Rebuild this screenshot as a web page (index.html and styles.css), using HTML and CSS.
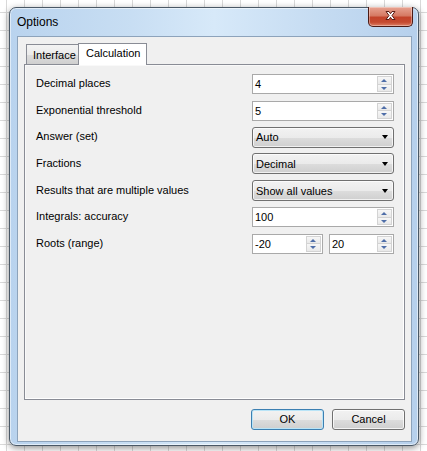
FILE: index.html
```html
<!DOCTYPE html>
<html>
<head>
<meta charset="utf-8">
<link rel="stylesheet" href="styles.css">
</head>
<body>
<div class="desktop">
  <div class="window">
    <div class="titlebar">
      <span class="title">Options</span>
      <div class="close">
        <svg width="45" height="20" viewBox="0 0 45 20">
          <path d="M18 5.5h3l1.5 2.2 1.5-2.2h3l-3 4 3 4h-3l-1.5-2.2-1.5 2.2h-3l3-4z" fill="#fff" stroke="#5a1c14" stroke-width="1" stroke-linejoin="round"/>
        </svg>
      </div>
    </div>
    <div class="client">
      <div class="tabs">
        <div class="tab">Interface</div>
        <div class="tab active">Calculation</div>
      </div>
      <div class="panel">
        <div class="form">
          <div class="label">Decimal places</div>
          <div class="spin"><span class="val">4</span><span class="arrows"><i class="up"></i><i class="down"></i></span></div>

          <div class="label">Exponential threshold</div>
          <div class="spin"><span class="val">5</span><span class="arrows"><i class="up"></i><i class="down"></i></span></div>

          <div class="label">Answer (set)</div>
          <div class="combo"><span class="val">Auto</span><span class="caret"></span></div>

          <div class="label">Fractions</div>
          <div class="combo"><span class="val">Decimal</span><span class="caret"></span></div>

          <div class="label">Results that are multiple values</div>
          <div class="combo"><span class="val">Show all values</span><span class="caret"></span></div>

          <div class="label">Integrals: accuracy</div>
          <div class="spin"><span class="val">100</span><span class="arrows"><i class="up"></i><i class="down"></i></span></div>

          <div class="label">Roots (range)</div>
          <div class="pair">
            <div class="spin first"><span class="val">-20</span><span class="arrows"><i class="up"></i><i class="down"></i></span></div>
            <div class="spin second"><span class="val">20</span><span class="arrows"><i class="up"></i><i class="down"></i></span></div>
          </div>
        </div>
      </div>
      <div class="buttons">
        <div class="btn default">OK</div>
        <div class="btn">Cancel</div>
      </div>
    </div>
  </div>
</div>
</body>
</html>
```

FILE: styles.css
```css
html, body {
  margin: 0;
  padding: 0;
}
body {
  width: 427px;
  height: 451px;
  overflow: hidden;
  background-color: #fff;
  background-image:
    linear-gradient(to right, #d9d9d9 1px, transparent 1px),
    linear-gradient(to bottom, #d9d9d9 1px, transparent 1px);
  background-size: 18px 18px;
  background-position: 6px 12px;
  font-family: "Liberation Sans", Arial, sans-serif;
  font-size: 11px;
  color: #000;
}
.desktop {
  padding: 7px 0 0 9px;
}
.window {
  box-sizing: border-box;
  width: 410px;
  height: 439px;
  border: 1px solid #4a5866;
  border-radius: 7px;
  background: linear-gradient(to right, #b9d3ee 0%, #c8def3 30%, #d7e9f9 50%, #c6dcf2 75%, #b6d0ec 100%);
  box-shadow: 0 2px 7px rgba(0,0,0,0.45), inset 0 0 0 1px rgba(255,255,255,0.55);
  display: flex;
  flex-direction: column;
}
.titlebar {
  height: 28px;
  display: flex;
  justify-content: space-between;
  align-items: flex-start;
  flex: none;
}
.title {
  font-size: 12px;
  line-height: 14px;
  padding: 7px 0 0 7px;
  color: #000;
}
.close {
  width: 45px;
  height: 20px;
  margin: -1px 5px 0 0;
  box-sizing: border-box;
  border: 1px solid #4b1a14;
  border-top: none;
  border-radius: 0 0 5px 5px;
  background: linear-gradient(to bottom, #e8a493 0%, #d67a64 45%, #c3432a 55%, #c54a30 80%, #dd8066 100%);
  box-shadow: inset 0 0 0 1px rgba(255,255,255,0.35);
}
.close svg {
  display: block;
  margin: -1px 0 0 -1px;
}
.client {
  box-sizing: border-box;
  margin: 0 6px 0 7px;
  height: 406px;
  background: #f0f0f0;
  border: 1px solid #8da3bb;
  padding: 6px 6px 0 6px;
  display: flex;
  flex-direction: column;
}
.tabs {
  display: flex;
  align-items: flex-end;
  padding-left: 2px;
  height: 21px;
  position: relative;
  z-index: 1;
}
.tab {
  box-sizing: border-box;
  height: 20px;
  width: 54px;
  padding-left: 6px;
  line-height: 20px;
  border: 1px solid #898c95;
  border-bottom: none;
  background: linear-gradient(to bottom, #f3f3f3 0%, #ebebeb 50%, #dddddd 51%, #cfcfcf 100%);
  color: #000;
}
.tab.active {
  height: 22px;
  width: 69px;
  margin-left: -2px;
  margin-bottom: -1px;
  padding-left: 7px;
  line-height: 18px;
  background: #fff;
  border-color: #898c95;
}
.panel {
  box-sizing: border-box;
  height: 336px;
  border: 1px solid #898c95;
  background: #f0f0f0;
  box-shadow: inset -1px -1px 0 #fff, inset 1px 1px 0 #f9f9f9;
  padding: 9px 10px 0 11px;
}
.form {
  display: grid;
  grid-template-columns: 1fr 142px;
  grid-auto-rows: 20px;
  row-gap: 6.67px;
  align-items: center;
}
.label {
  line-height: 13px;
  padding-bottom: 1px;
}
.spin {
  box-sizing: border-box;
  height: 20px;
  border: 1px solid #a9a9a9;
  background: #fff;
  display: flex;
  align-items: center;
  justify-content: space-between;
}
.spin .val {
  padding-left: 2px;
}
.arrows {
  display: flex;
  flex-direction: column;
  width: 15px;
  height: 16px;
  margin-right: 1px;
}
.arrows i {
  box-sizing: border-box;
  flex: 1;
  border: 1px solid #d3d3d3;
  background: linear-gradient(to bottom, #f7f7f7, #e9e9e9);
  position: relative;
}
.arrows i.down {
  border-top: none;
}
.arrows i::after {
  content: "";
  position: absolute;
  left: 3px;
  width: 0;
  height: 0;
  border-left: 3.5px solid transparent;
  border-right: 3.5px solid transparent;
}
.arrows i.up::after {
  top: 2px;
  border-bottom: 3px solid #4f6ea8;
}
.arrows i.down::after {
  top: 2px;
  border-top: 3px solid #4f6ea8;
}
.combo {
  box-sizing: border-box;
  height: 21px;
  border: 1px solid #707070;
  border-radius: 3px;
  background: linear-gradient(to bottom, #f2f2f2 0%, #ebebeb 50%, #dddddd 51%, #cfcfcf 100%);
  box-shadow: inset 0 0 0 1px rgba(255,255,255,0.7);
  display: flex;
  align-items: center;
  justify-content: space-between;
  padding: 0 4px 0 3px;
}
.caret {
  width: 0;
  height: 0;
  border-left: 3.5px solid transparent;
  border-right: 3.5px solid transparent;
  border-top: 4px solid #000;
  margin-right: 1px;
}
.pair {
  display: flex;
  gap: 6px;
}
.pair .first {
  width: 71px;
}
.pair .second {
  flex: 1;
}
.buttons {
  display: flex;
  justify-content: flex-end;
  gap: 8px;
  margin-top: 9px;
}
.btn {
  box-sizing: border-box;
  width: 73px;
  height: 21px;
  border: 1px solid #707070;
  border-radius: 3px;
  background: linear-gradient(to bottom, #f2f2f2 0%, #ebebeb 50%, #dddddd 51%, #cfcfcf 100%);
  box-shadow: inset 0 0 0 1px rgba(255,255,255,0.75);
  text-align: center;
  line-height: 19px;
}
.btn.default {
  border-color: #3c7fb1;
  box-shadow: inset 0 0 0 1px #b9e4f7;
}
```
